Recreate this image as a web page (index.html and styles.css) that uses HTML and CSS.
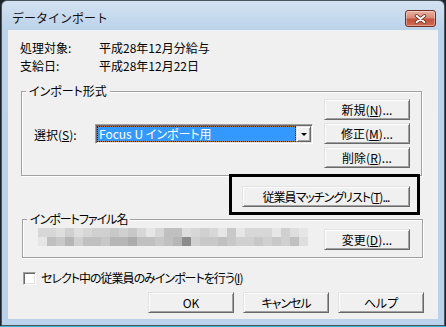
FILE: index.html
```html
<!DOCTYPE html>
<html lang="ja">
<head>
<meta charset="utf-8">
<title>データインポート</title>
<link rel="stylesheet" href="styles.css">
</head>
<body>
<div class="window">
  <div class="titlebar">
    <span class="title">データインポート</span>
    <div class="close">
      <svg width="13" height="10" viewBox="0 0 13 10"><path d="M2.5 1.8 L10.5 8.2 M10.5 1.8 L2.5 8.2" stroke="#6a2a1f" stroke-width="3.4" stroke-linecap="round" fill="none"/><path d="M2.5 1.8 L10.5 8.2 M10.5 1.8 L2.5 8.2" stroke="#fff" stroke-width="1.9" stroke-linecap="round" fill="none"/></svg>
    </div>
  </div>
  <div class="client">
    <div class="info">
      <div class="row"><span class="lbl">処理対象:</span><span>平成28年12月分給与</span></div>
      <div class="row"><span class="lbl">支給日:</span><span>平成28年12月22日</span></div>
    </div>

    <div class="group g1">
      <span class="legend">インポート形式</span>
      <div class="g1-left">
        <span class="sel-label">選択(<u>S</u>):</span>
        <div class="combo">
          <div class="combo-val">Focus U インポート用</div>
          <div class="combo-btn"><span class="arrow"></span></div>
        </div>
      </div>
      <div class="btn-col">
        <button class="btn">新規(<u>N</u>)...</button>
        <button class="btn">修正(<u>M</u>)...</button>
        <button class="btn">削除(<u>R</u>)...</button>
      </div>
    </div>

    <div class="match-row"><button class="btn wide tight">従業員マッチングリスト(<u>T</u>)...</button></div>

    <div class="group g2">
      <span class="legend tight">インポートファイル名</span>
      <div class="mosaic">
        <i class="m2"></i><i class="m2"></i><i class="m1"></i><i class="m3"></i><i class="m1"></i><i class="m2"></i><i class="m3"></i><i class="m3"></i><i class="m4"></i><i class="m3"></i><i class="m4"></i><i class="m2"></i><i class="m0"></i><i class="m2"></i><i class="m5"></i><i class="m5"></i><i class="m1"></i><i class="m2"></i><i class="m3"></i><i class="m2"></i><i class="m0"></i><i class="m4"></i><i class="m0"></i><i class="m2"></i><i class="m2"></i><i class="m2"></i><i class="m0"></i><i class="m3"></i><i class="m1"></i><i class="m0"></i>
        <i class="m0"></i><i class="m5"></i><i class="m4"></i><i class="m6"></i><i class="m3"></i><i class="m5"></i><i class="m5"></i><i class="m4"></i><i class="m6"></i><i class="m6"></i><i class="m7"></i><i class="m5"></i><i class="m5"></i><i class="m4"></i><i class="m5"></i><i class="m6"></i><i class="m8"></i><i class="m3"></i><i class="m4"></i><i class="m4"></i><i class="m5"></i><i class="m4"></i><i class="m3"></i><i class="m3"></i><i class="m4"></i><i class="m3"></i><i class="m4"></i><i class="m3"></i><i class="m5"></i><i class="m1"></i>
      </div>
      <button class="btn">変更(<u>D</u>)...</button>
    </div>

    <label class="check"><span class="box"></span><span class="tight">セレクト中の従業員のみインポートを行う(<u>I</u>)</span></label>

    <div class="actions">
      <button class="btn">OK</button>
      <button class="btn tight">キャンセル</button>
      <button class="btn">ヘルプ</button>
    </div>

    <div class="highlight"></div>
  </div>
</div>
</body>
</html>
```
FILE: styles.css
```css
html, body {
  margin: 0;
  padding: 0;
}

body {
  width: 446px;
  height: 327px;
  overflow: hidden;
  background: linear-gradient(#1d2329 0, #1d2329 326px, #3bb4d3 326px);
  font-family: "Noto Sans CJK JP", "Noto Sans", sans-serif;
  font-size: 12px;
  color: #000;
  font-feature-settings: "palt" 1;
}

.window {
  margin-left: 1px;
  width: 444px;
  height: 326px;
  box-sizing: border-box;
  border: 1px solid #4b5661;
  border-radius: 6px 6px 0 0;
  background: linear-gradient(#d3e2f2, #bcd3ea 28px, #bad2ea);
  display: flex;
  flex-direction: column;
}

.titlebar {
  height: 29px;
  flex: none;
  display: flex;
  align-items: flex-start;
}

.title {
  margin: 9px 0 0 10px;
  line-height: 16px;
  font-size: 12px;
  font-feature-settings: normal;
  color: #111;
}

.close {
  margin: 9px 8px 0 auto;
  width: 31px;
  height: 17px;
  box-sizing: border-box;
  border: 1px solid #6e3025;
  border-radius: 3px;
  background: linear-gradient(#eab0a2, #d98a78 45%, #c3523e 55%, #cf6b52);
  box-shadow: inset 0 0 0 1px rgba(255, 255, 255, 0.35);
  display: flex;
  align-items: center;
  justify-content: center;
}

.client {
  flex: 1;
  margin: 0 6px 6px;
  background: #f0f0f0;
  position: relative;
}

.tight {
  letter-spacing: -1px;
}

.info {
  padding: 9px 0 0 12px;
}

.row {
  display: flex;
  height: 18px;
  line-height: 18px;
}

.lbl {
  width: 79px;
}

.group {
  position: relative;
  box-sizing: border-box;
  border: 1px solid #a0a0a0;
  box-shadow: inset 1px 1px 0 #fff, 1px 1px 0 #fff;
}

.legend {
  position: absolute;
  top: -9px;
  left: 4px;
  padding: 0 3px;
  line-height: 16px;
  background: #f0f0f0;
}

.g1 {
  margin: 16px 0 0 13px;
  width: 401px;
  height: 85px;
  padding: 7px 11px 6px 12px;
  display: flex;
}

.g1-left {
  flex: 1;
  display: flex;
  align-items: center;
}

.sel-label {
  width: 61px;
}

.combo {
  width: 218px;
  height: 20px;
  box-sizing: border-box;
  border: 1px solid;
  border-color: #a0a0a0 #fff #fff #a0a0a0;
  box-shadow: inset 1px 1px 0 #696969, inset -1px -1px 0 #e3e3e3;
  padding: 1px;
  background: #fff;
  display: flex;
}

.combo-val {
  flex: 1;
  box-sizing: border-box;
  border: 1px dotted #1a1a1a;
  background: linear-gradient(#3399ff, #3399ff) padding-box, linear-gradient(#c87a28, #c87a28) border-box;
  color: #fff;
  line-height: 14px;
  padding-left: 1px;
  white-space: nowrap;
  overflow: hidden;
}

.combo-btn {
  width: 15px;
  box-sizing: border-box;
  border: 1px solid;
  border-color: #e3e3e3 #696969 #696969 #e3e3e3;
  box-shadow: inset 1px 1px 0 #fff, inset -1px -1px 0 #a0a0a0;
  background: #f0f0f0;
  display: flex;
  align-items: center;
  justify-content: center;
}

.arrow {
  width: 0;
  height: 0;
  border-left: 3px solid transparent;
  border-right: 3px solid transparent;
  border-top: 3px solid #000;
  margin-top: 1px;
}

.btn-col {
  display: flex;
  flex-direction: column;
  gap: 3px;
}

.btn {
  width: 86px;
  height: 21px;
  box-sizing: border-box;
  padding: 0;
  margin: 0;
  font: inherit;
  font-feature-settings: "palt" 1;
  color: #000;
  background: #f0f0f0;
  border: 1px solid;
  border-color: #e3e3e3 #696969 #696969 #e3e3e3;
  box-shadow: inset 1px 1px 0 #fff, inset -1px -1px 0 #a0a0a0;
  line-height: 17px;
  text-align: center;
}

.match-row {
  margin: 10px 0 0 234px;
}

.wide {
  width: 168px;
}

.g2 {
  margin: 12px 0 0 14px;
  width: 401px;
  height: 39px;
  padding: 9px 12px 7px 15px;
  display: flex;
  justify-content: space-between;
  align-items: flex-start;
}

.mosaic {
  margin-top: -1px;
  display: grid;
  grid-template-columns: repeat(30, 9px);
  grid-auto-rows: 9px;
}

.mosaic i { display: block; }
.m0 { background: #e6e6e6; }
.m1 { background: #dedede; }
.m2 { background: #d7d7d7; }
.m3 { background: #d0d0d0; }
.m4 { background: #c8c8c8; }
.m5 { background: #c0c0c0; }
.m6 { background: #b6b6b6; }
.m7 { background: #acacac; }
.m8 { background: #8c8c8c; }

.check {
  display: flex;
  align-items: center;
  gap: 5px;
  height: 18px;
  margin: 11px 0 0 15px;
  line-height: 18px;
}

.box {
  width: 13px;
  height: 13px;
  box-sizing: border-box;
  border: 1px solid;
  border-color: #a0a0a0 #fff #fff #a0a0a0;
  box-shadow: inset 1px 1px 0 #696969, inset -1px -1px 0 #e3e3e3;
  background: #fff;
}

.actions {
  display: flex;
  gap: 9px;
  margin: 5px 0 0 140px;
}

.highlight {
  position: absolute;
  left: 221px;
  top: 144px;
  width: 191px;
  height: 41px;
  box-sizing: border-box;
  border: 3px solid #000;
}
```
